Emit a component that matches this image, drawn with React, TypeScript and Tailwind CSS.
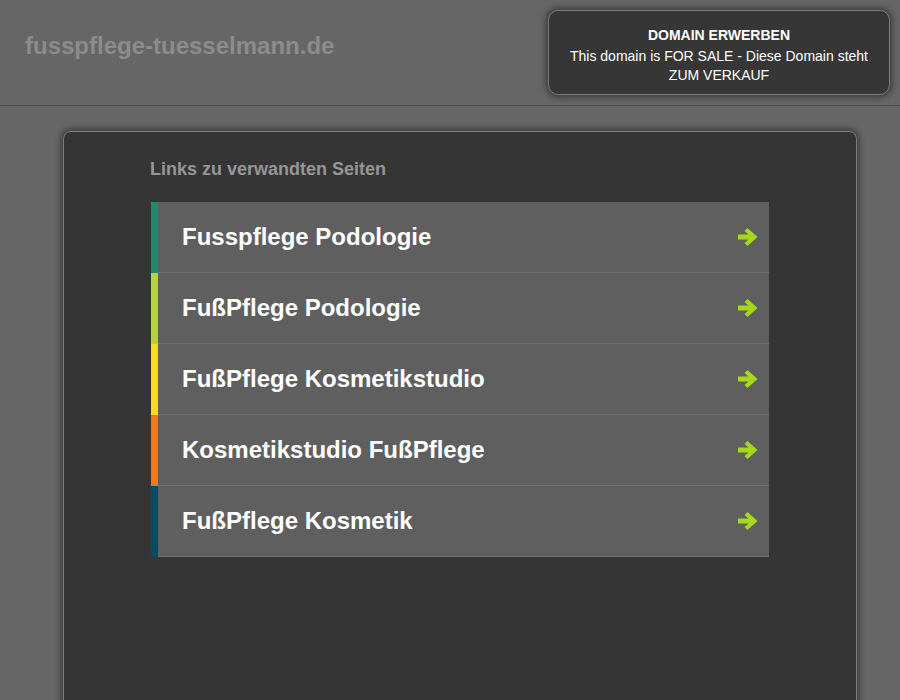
import React from "react";

const links = [
  { label: "Fusspflege Podologie", color: "bg-[#1e8a6e]" },
  { label: "FußPflege Podologie", color: "bg-[#b5d334]" },
  { label: "FußPflege Kosmetikstudio", color: "bg-[#f5dc1e]" },
  { label: "Kosmetikstudio FußPflege", color: "bg-[#f3780f]" },
  { label: "FußPflege Kosmetik", color: "bg-[#0a4a5e]" },
];

function Arrow() {
  return (
    <svg width="20" height="18" viewBox="0 0 20 18" className="shrink-0">
      <path d="M0 6.5 H10.5 L6.5 3 L9.5 0 L19.5 9 L9.5 18 L6.5 15 L10.5 11.5 H0 Z" fill="#a6d81a" />
    </svg>
  );
}

export default function App() {
  return (
    <div
      className="min-h-[700px] h-[700px] overflow-hidden bg-[#666666]"
      style={{ fontFamily: '"Liberation Sans", Arial, sans-serif' }}
    >
      <header className="h-[106px] border-b border-[#4e4e4e] flex items-start justify-between">
        <div className="pl-[25px] pt-[31px] text-[24px] font-bold text-[#8c8c8c] leading-[30px]">
          fusspflege-tuesselmann.de
        </div>
        <div className="mt-[10px] mr-[10px] w-[342px] h-[85px] rounded-[10px] border border-[#7a7a7a] bg-[#363636] shadow-[0_0_6px_2px_rgba(0,0,0,0.45)] flex flex-col items-center pt-[15px] text-center text-white text-[14px]">
          <div className="font-bold leading-[18px]">DOMAIN ERWERBEN</div>
          <div className="leading-[19px] mt-[3px] px-[18px]">
            This domain is FOR SALE - Diese Domain steht ZUM VERKAUF
          </div>
        </div>
      </header>
      <main className="ml-[63px] mt-[25px] w-[794px] h-[700px] rounded-[8px] border border-[#7c7c7c] bg-[#353535] shadow-[0_0_6px_2px_rgba(0,0,0,0.45)] pl-[86px] pt-[26px]">
        <div className="text-[18px] font-bold text-[#969696] leading-[22px]">
          Links zu verwandten Seiten
        </div>
        <div className="mt-[22px] ml-[1px] w-[618px] flex flex-col">
          {links.map((l) => (
            <div key={l.label} className="flex h-[71px]">
              <div className={`w-[7px] ${l.color}`} />
              <div className="flex-1 flex items-center justify-between bg-[#5f5f5f] border-b border-[#707070] pl-[24px] pr-[11px]">
                <span className="text-[24px] font-bold text-white">{l.label}</span>
                <Arrow />
              </div>
            </div>
          ))}
        </div>
      </main>
    </div>
  );
}
